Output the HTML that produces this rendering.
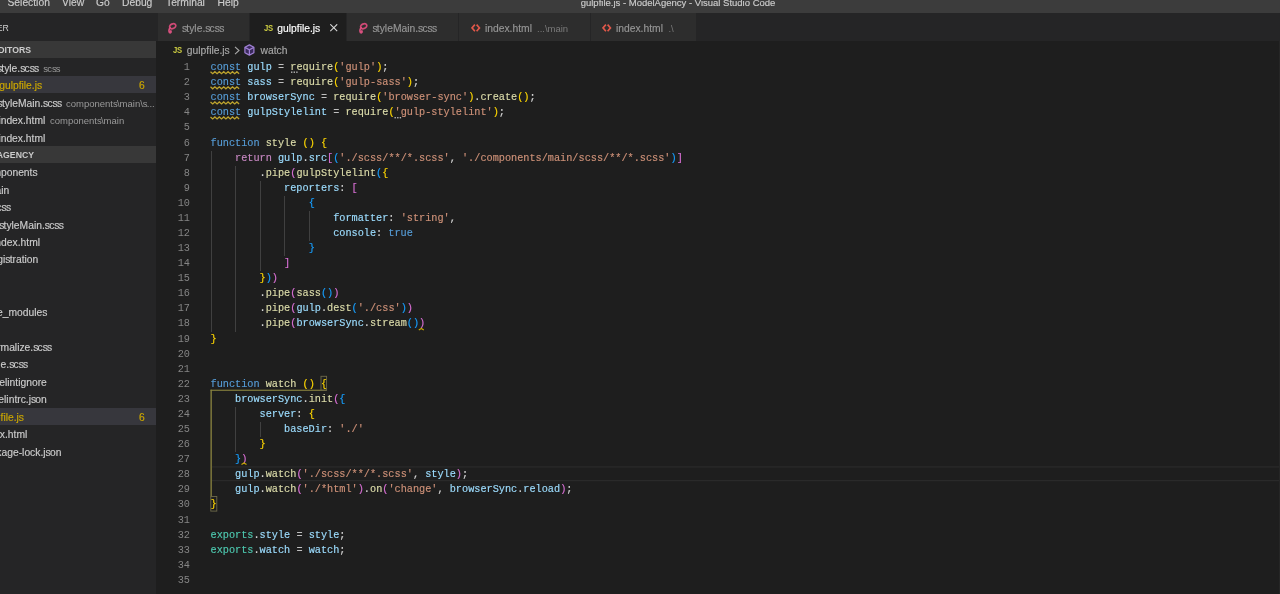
<!DOCTYPE html>
<html><head><meta charset="utf-8"><style>
*{margin:0;padding:0;box-sizing:border-box}
html,body{width:1280px;height:594px;overflow:hidden;background:#1e1e1e;font-family:"Liberation Sans",sans-serif}
.abs{position:absolute}
#title{position:absolute;left:0;top:0;width:1280px;height:13px;background:#3c3c3c;overflow:hidden}
#title span{position:absolute;top:-3.6px;font-size:10.3px;color:#cccccc;line-height:14px;white-space:nowrap}
#side{position:absolute;left:0;top:0;width:156px;height:594px;overflow:hidden}
#sidebg{position:absolute;left:0;top:13px;width:156px;height:581px;background:#252526}
#tabbar{position:absolute;left:156px;top:13px;width:1124px;height:27.8px;background:#252526}
#sep{position:absolute;left:156px;top:40.8px;width:1px;height:554px;background:#1e1e1e}
.tab{position:absolute;top:13px;height:27.8px;background:#2d2d2d}
.tab.act{background:#1e1e1e}
.tt,.td{position:absolute;top:21.5px;font-size:10.3px;line-height:14px;color:#969696;white-space:nowrap}
.td{font-size:9.5px;color:#7a7a7a;top:22.3px}
.tt.w{color:#ffffff}
.jsic{position:absolute;font-size:9.4px;font-weight:bold;color:#cbcb41;line-height:14px;letter-spacing:-0.3px;transform:scaleX(0.82);transform-origin:0 0}
.bc{position:absolute;top:43.7px;font-size:10.3px;line-height:14px;color:#a8a8a8;white-space:nowrap}
.ln{position:absolute;left:150px;width:40px;text-align:right;height:15.08px;line-height:15.08px;color:#858585;font-family:"Liberation Mono",monospace;font-size:10.23px;white-space:pre}
.cl{position:absolute;left:210.5px;height:15.08px;line-height:15.08px;font-family:"Liberation Mono",monospace;font-size:10.23px;white-space:pre;color:#d4d4d4;-webkit-text-stroke:0.15px currentColor}
.o{color:#c0c0c0;-webkit-text-stroke:0}.k{color:#569cd6}.c{color:#c586c0}.v{color:#9cdcfe}.f{color:#dcdcaa}.s{color:#ce9178}.p{color:#d4d4d4}.t{color:#4ec9b0}
.b1{color:#ffd700}.b2{color:#da70d6}.b3{color:#179fff}
.ig{position:absolute;width:1px;background:#404040}
.hdr{position:absolute;left:0;width:156px;height:17.47px;background:#383838}
.sel{position:absolute;left:0;width:156px;height:17.47px;background:#37373d}
.sh{position:absolute;font-size:8.7px;font-weight:bold;line-height:17.47px;color:#cccccc;white-space:nowrap}
.si{position:absolute;font-size:10.3px;line-height:17.47px;color:#cccccc;white-space:nowrap}
.si.warn{color:#cca700}
.sd{position:absolute;font-size:9.5px;line-height:17.47px;color:#9a9a9a;white-space:nowrap}
i.n{font-style:normal;letter-spacing:-0.8px}
.si,.tt,.bc,.badge,#title span{-webkit-text-stroke:0.15px currentColor}
.badge{position:absolute;font-size:10.3px;line-height:17.47px;color:#cca700}
</style></head><body>
<div id="root" style="position:absolute;left:0;top:0;width:1280px;height:594px;will-change:transform">
<div id="title">
<span style="left:7.5px">Selection</span><span style="left:62px">View</span><span style="left:96px">Go</span><span style="left:122px">Debug</span><span style="left:166px">Terminal</span><span style="left:217.5px">Help</span>
<span style="left:580.7px;font-size:9.5px">gulpfile.js - ModelAgency - Visual Studio Code</span>
</div>
<div id="sidebg"></div>
<div id="side">
<span class="sh" style="right:147.2px;top:20.00px;font-weight:normal">EXPLORER</span>
<div class="hdr" style="top:40.80px"></div><span class="sh" style="right:125.0px;top:42.10px">OPEN EDITORS</span>
<span class="si" style="right:117.6px;top:59.77px"><i class="n">s</i>tyle.<i class="n">s</i>c<i class="n">s</i><i class="n">s</i></span>
<span class="sd" style="left:43.2px;top:59.77px"><i class="n">s</i>c<i class="n">s</i><i class="n">s</i></span>
<div class="sel" style="top:75.74px"></div>
<span class="si warn" style="right:114.7px;top:77.24px">gulpfile.j<i class="n">s</i></span>
<span class="badge" style="left:138.9px;top:77.24px">6</span>
<span class="si" style="right:94.7px;top:94.71px"><i class="n">s</i>tyleMain.<i class="n">s</i>c<i class="n">s</i><i class="n">s</i></span>
<span class="sd" style="left:66.0px;top:94.71px">component<i class="n">s</i>\main\<i class="n">s</i>...</span>
<span class="si" style="right:110.7px;top:112.18px">index.html</span>
<span class="sd" style="left:50.0px;top:112.18px">component<i class="n">s</i>\main</span>
<span class="si" style="right:110.7px;top:129.65px">index.html</span>
<div class="hdr" style="top:145.62px"></div><span class="sh" style="right:122.0px;top:146.92px">MODELAGENCY</span>
<span class="si" style="right:119.2px;top:164.09px">component<i class="n">s</i></span>
<span class="si" style="right:146.8px;top:181.56px">main</span>
<span class="si" style="right:145.7px;top:199.03px"><i class="n">s</i>c<i class="n">s</i><i class="n">s</i></span>
<span class="si" style="right:93.0px;top:216.50px"><i class="n">s</i>tyleMain.<i class="n">s</i>c<i class="n">s</i><i class="n">s</i></span>
<span class="si" style="right:116.0px;top:233.97px">index.html</span>
<span class="si" style="right:117.7px;top:251.44px">regi<i class="n">s</i>tration</span>
<span class="si" style="right:109.4px;top:303.85px">node_module<i class="n">s</i></span>
<span class="si" style="right:104.6px;top:338.79px">normalize.<i class="n">s</i>c<i class="n">s</i><i class="n">s</i></span>
<span class="si" style="right:128.6px;top:356.26px"><i class="n">s</i>tyle.<i class="n">s</i>c<i class="n">s</i><i class="n">s</i></span>
<span class="si" style="right:109.2px;top:373.73px">.<i class="n">s</i>tylelintignore</span>
<span class="si" style="right:109.2px;top:391.20px">.<i class="n">s</i>tylelintrc.j<i class="n">s</i>on</span>
<div class="sel" style="top:407.67px"></div>
<span class="si warn" style="right:132.8px;top:408.67px">gulpfile.j<i class="n">s</i></span>
<span class="badge" style="left:138.9px;top:408.67px">6</span>
<span class="si" style="right:128.7px;top:426.14px">index.html</span>
<span class="si" style="right:94.6px;top:443.61px">package-lock.j<i class="n">s</i>on</span>
</div>
<div id="sep"></div>
<div id="tabbar"></div>
<div class="tab" style="left:157.5px;width:91.5px"></div>
<div class="tab act" style="left:250px;width:96px"></div>
<div class="tab" style="left:347px;width:110.5px"></div>
<div class="tab" style="left:459px;width:130.5px"></div>
<div class="tab" style="left:590.5px;width:105.5px"></div>
<svg class="abs" style="left:167px;top:21.6px" width="11" height="12" viewBox="0 0 11 12"><ellipse cx="5.7" cy="4.2" rx="3.2" ry="2.3" transform="rotate(-25 5.7 4.2)" fill="none" stroke="#d04a76" stroke-width="1.7"/><path d="M3.2 5.6 C2.0 7.0 1.6 9.4 2.6 10.6 C3.4 11.2 4.4 10.2 3.8 9.0" fill="none" stroke="#d8507e" stroke-width="1.8" stroke-linecap="round"/></svg>
<span class="tt" style="left:182px"><i class="n">s</i>tyle.<i class="n">s</i>c<i class="n">s</i><i class="n">s</i></span>
<span class="jsic" style="left:263.5px;top:20.9px">JS</span>
<span class="tt w" style="left:277.3px">gulpfile.j<i class="n">s</i></span>
<svg class="abs" style="left:330px;top:24.2px" width="8" height="8" viewBox="0 0 8 8"><path d="M0.3 0.3 L7.2 7.2 M7.2 0.3 L0.3 7.2" stroke="#d8d8d8" stroke-width="1.1"/></svg>
<svg class="abs" style="left:357.8px;top:21.6px" width="11" height="12" viewBox="0 0 11 12"><ellipse cx="5.7" cy="4.2" rx="3.2" ry="2.3" transform="rotate(-25 5.7 4.2)" fill="none" stroke="#d04a76" stroke-width="1.7"/><path d="M3.2 5.6 C2.0 7.0 1.6 9.4 2.6 10.6 C3.4 11.2 4.4 10.2 3.8 9.0" fill="none" stroke="#d8507e" stroke-width="1.8" stroke-linecap="round"/></svg>
<span class="tt" style="left:372.5px"><i class="n">s</i>tyleMain.<i class="n">s</i>c<i class="n">s</i><i class="n">s</i></span>
<svg class="abs" style="left:470.6px;top:24px" width="10" height="8" viewBox="0 0 10 8"><path d="M3.9 0.6 L1.0 3.9 L3.9 7.2 M5.6 0.6 L8.5 3.9 L5.6 7.2" fill="none" stroke="#e2584a" stroke-width="1.6"/></svg>
<span class="tt" style="left:485px">index.html</span><span class="td" style="left:537px">...\main</span>
<svg class="abs" style="left:601.6px;top:24px" width="10" height="8" viewBox="0 0 10 8"><path d="M3.9 0.6 L1.0 3.9 L3.9 7.2 M5.6 0.6 L8.5 3.9 L5.6 7.2" fill="none" stroke="#e2584a" stroke-width="1.6"/></svg>
<span class="tt" style="left:616px">index.html</span><span class="td" style="left:668.4px">.\</span>
<span class="jsic" style="left:172.8px;top:43.1px">JS</span>
<span class="bc" style="left:186.8px">gulpfile.j<i class="n">s</i></span>
<svg class="abs" style="left:233.5px;top:45.5px" width="6" height="9" viewBox="0 0 6 9"><path d="M1 0.8 L5 4.5 L1 8.2" fill="none" stroke="#a8a8a8" stroke-width="1.1"/></svg>
<svg class="abs" style="left:244.1px;top:43.6px" width="11" height="12" viewBox="0 0 11 12"><path d="M5.4 0.9 L9.9 3.3 L9.9 8.7 L5.4 11.1 L0.9 8.7 L0.9 3.3 Z" fill="#3a2a5c" stroke="#a080d4" stroke-width="1.2" stroke-linejoin="round"/><path d="M1 3.4 L5.4 5.7 L9.8 3.4 M5.4 5.7 L5.4 11" fill="none" stroke="#a080d4" stroke-width="1.2"/></svg>
<span class="bc" style="left:260.5px">watch</span>
<div class="ig" style="left:210.50px;top:150.58px;height:180.96px"></div>
<div class="ig" style="left:235.06px;top:165.66px;height:165.88px"></div>
<div class="ig" style="left:259.61px;top:180.74px;height:90.48px"></div>
<div class="ig" style="left:284.17px;top:195.82px;height:60.32px"></div>
<div class="ig" style="left:308.72px;top:210.90px;height:30.16px"></div>
<div class="ig" style="left:235.06px;top:406.94px;height:45.24px"></div>
<div class="ig" style="left:259.61px;top:422.02px;height:15.08px"></div>
<div class="ln" style="top:60.10px">1</div><div class="cl" style="top:60.10px"><span class="k">const</span><span class="p"> </span><span class="v">gulp</span><span class="p"> </span><span class="o">=</span><span class="p"> </span><span class="f">require</span><span class="b1">(</span><span class="s">'gulp'</span><span class="b1">)</span><span class="p">;</span></div>
<div class="ln" style="top:75.18px">2</div><div class="cl" style="top:75.18px"><span class="k">const</span><span class="p"> </span><span class="v">sass</span><span class="p"> </span><span class="o">=</span><span class="p"> </span><span class="f">require</span><span class="b1">(</span><span class="s">'gulp-sass'</span><span class="b1">)</span><span class="p">;</span></div>
<div class="ln" style="top:90.26px">3</div><div class="cl" style="top:90.26px"><span class="k">const</span><span class="p"> </span><span class="v">browserSync</span><span class="p"> </span><span class="o">=</span><span class="p"> </span><span class="f">require</span><span class="b1">(</span><span class="s">'browser-sync'</span><span class="b1">)</span><span class="p">.</span><span class="f">create</span><span class="b1">()</span><span class="p">;</span></div>
<div class="ln" style="top:105.34px">4</div><div class="cl" style="top:105.34px"><span class="k">const</span><span class="p"> </span><span class="v">gulpStylelint</span><span class="p"> </span><span class="o">=</span><span class="p"> </span><span class="f">require</span><span class="b1">(</span><span class="s">'gulp-stylelint'</span><span class="b1">)</span><span class="p">;</span></div>
<div class="ln" style="top:120.42px">5</div><div class="cl" style="top:120.42px"></div>
<div class="ln" style="top:135.50px">6</div><div class="cl" style="top:135.50px"><span class="k">function</span><span class="p"> </span><span class="f">style</span><span class="p"> </span><span class="b1">()</span><span class="p"> </span><span class="b1">{</span></div>
<div class="ln" style="top:150.58px">7</div><div class="cl" style="top:150.58px"><span class="p">    </span><span class="c">return</span><span class="p"> </span><span class="v">gulp</span><span class="p">.</span><span class="v">src</span><span class="b2">[</span><span class="b3">(</span><span class="s">'./scss/**/*.scss'</span><span class="p">, </span><span class="s">'./components/main/scss/**/*.scss'</span><span class="b3">)</span><span class="b2">]</span></div>
<div class="ln" style="top:165.66px">8</div><div class="cl" style="top:165.66px"><span class="p">        .</span><span class="f">pipe</span><span class="b2">(</span><span class="f">gulpStylelint</span><span class="b3">(</span><span class="b1">{</span></div>
<div class="ln" style="top:180.74px">9</div><div class="cl" style="top:180.74px"><span class="p">            </span><span class="v">reporters</span><span class="p">: </span><span class="b2">[</span></div>
<div class="ln" style="top:195.82px">10</div><div class="cl" style="top:195.82px"><span class="p">                </span><span class="b3">{</span></div>
<div class="ln" style="top:210.90px">11</div><div class="cl" style="top:210.90px"><span class="p">                    </span><span class="v">formatter</span><span class="p">: </span><span class="s">'string'</span><span class="p">,</span></div>
<div class="ln" style="top:225.98px">12</div><div class="cl" style="top:225.98px"><span class="p">                    </span><span class="v">console</span><span class="p">: </span><span class="k">true</span></div>
<div class="ln" style="top:241.06px">13</div><div class="cl" style="top:241.06px"><span class="p">                </span><span class="b3">}</span></div>
<div class="ln" style="top:256.14px">14</div><div class="cl" style="top:256.14px"><span class="p">            </span><span class="b2">]</span></div>
<div class="ln" style="top:271.22px">15</div><div class="cl" style="top:271.22px"><span class="p">        </span><span class="b1">}</span><span class="b3">)</span><span class="b2">)</span></div>
<div class="ln" style="top:286.30px">16</div><div class="cl" style="top:286.30px"><span class="p">        .</span><span class="f">pipe</span><span class="b2">(</span><span class="f">sass</span><span class="b3">()</span><span class="b2">)</span></div>
<div class="ln" style="top:301.38px">17</div><div class="cl" style="top:301.38px"><span class="p">        .</span><span class="f">pipe</span><span class="b2">(</span><span class="v">gulp</span><span class="p">.</span><span class="f">dest</span><span class="b3">(</span><span class="s">'./css'</span><span class="b3">)</span><span class="b2">)</span></div>
<div class="ln" style="top:316.46px">18</div><div class="cl" style="top:316.46px"><span class="p">        .</span><span class="f">pipe</span><span class="b2">(</span><span class="v">browserSync</span><span class="p">.</span><span class="f">stream</span><span class="b3">()</span><span class="b2">)</span></div>
<div class="ln" style="top:331.54px">19</div><div class="cl" style="top:331.54px"><span class="b1">}</span></div>
<div class="ln" style="top:346.62px">20</div><div class="cl" style="top:346.62px"></div>
<div class="ln" style="top:361.70px">21</div><div class="cl" style="top:361.70px"></div>
<div class="ln" style="top:376.78px">22</div><div class="cl" style="top:376.78px"><span class="k">function</span><span class="p"> </span><span class="f">watch</span><span class="p"> </span><span class="b1">()</span><span class="p"> </span><span class="b1">{</span></div>
<div class="ln" style="top:391.86px">23</div><div class="cl" style="top:391.86px"><span class="p">    </span><span class="v">browserSync</span><span class="p">.</span><span class="f">init</span><span class="b2">(</span><span class="b3">{</span></div>
<div class="ln" style="top:406.94px">24</div><div class="cl" style="top:406.94px"><span class="p">        </span><span class="v">server</span><span class="p">: </span><span class="b1">{</span></div>
<div class="ln" style="top:422.02px">25</div><div class="cl" style="top:422.02px"><span class="p">            </span><span class="v">baseDir</span><span class="p">: </span><span class="s">'./'</span></div>
<div class="ln" style="top:437.10px">26</div><div class="cl" style="top:437.10px"><span class="p">        </span><span class="b1">}</span></div>
<div class="ln" style="top:452.18px">27</div><div class="cl" style="top:452.18px"><span class="p">    </span><span class="b3">}</span><span class="b2">)</span></div>
<div class="ln" style="top:467.26px">28</div><div class="cl" style="top:467.26px"><span class="p">    </span><span class="v">gulp</span><span class="p">.</span><span class="f">watch</span><span class="b2">(</span><span class="s">'./scss/**/*.scss'</span><span class="p">, </span><span class="v">style</span><span class="b2">)</span><span class="p">;</span></div>
<div class="ln" style="top:482.34px">29</div><div class="cl" style="top:482.34px"><span class="p">    </span><span class="v">gulp</span><span class="p">.</span><span class="f">watch</span><span class="b2">(</span><span class="s">'./*html'</span><span class="b2">)</span><span class="p">.</span><span class="f">on</span><span class="b2">(</span><span class="s">'change'</span><span class="p">, </span><span class="v">browserSync</span><span class="p">.</span><span class="v">reload</span><span class="b2">)</span><span class="p">;</span></div>
<div class="ln" style="top:497.42px">30</div><div class="cl" style="top:497.42px"><span class="b1">}</span></div>
<div class="ln" style="top:512.50px">31</div><div class="cl" style="top:512.50px"></div>
<div class="ln" style="top:527.58px">32</div><div class="cl" style="top:527.58px"><span class="t">exports</span><span class="p">.</span><span class="v">style</span><span class="p"> </span><span class="o">=</span><span class="p"> </span><span class="v">style</span><span class="p">;</span></div>
<div class="ln" style="top:542.66px">33</div><div class="cl" style="top:542.66px"><span class="t">exports</span><span class="p">.</span><span class="v">watch</span><span class="p"> </span><span class="o">=</span><span class="p"> </span><span class="v">watch</span><span class="p">;</span></div>
<div class="ln" style="top:557.74px">34</div><div class="cl" style="top:557.74px"></div>
<div class="ln" style="top:572.82px">35</div><div class="cl" style="top:572.82px"></div>
<svg style="position:absolute;left:0;top:0" width="1280" height="594"><polyline points="210.5,71.7 212.7,73.7 214.9,71.7 217.1,73.7 219.3,71.7 221.5,73.7 223.7,71.7 225.9,73.7 228.1,71.7 230.3,73.7 232.5,71.7 234.7,73.7 236.9,71.7 239.1,73.7" fill="none" stroke="#bca32e" stroke-width="1.3"/><polyline points="210.5,86.8 212.7,88.8 214.9,86.8 217.1,88.8 219.3,86.8 221.5,88.8 223.7,86.8 225.9,88.8 228.1,86.8 230.3,88.8 232.5,86.8 234.7,88.8 236.9,86.8 239.1,88.8" fill="none" stroke="#bca32e" stroke-width="1.3"/><polyline points="210.5,101.9 212.7,103.9 214.9,101.9 217.1,103.9 219.3,101.9 221.5,103.9 223.7,101.9 225.9,103.9 228.1,101.9 230.3,103.9 232.5,101.9 234.7,103.9 236.9,101.9 239.1,103.9" fill="none" stroke="#bca32e" stroke-width="1.3"/><polyline points="210.5,116.9 212.7,118.9 214.9,116.9 217.1,118.9 219.3,116.9 221.5,118.9 223.7,116.9 225.9,118.9 228.1,116.9 230.3,118.9 232.5,116.9 234.7,118.9 236.9,116.9 239.1,118.9" fill="none" stroke="#bca32e" stroke-width="1.3"/><rect x="291.0" y="71.5" width="1.4" height="1.4" fill="#b4b4b4"/><rect x="293.6" y="71.5" width="1.4" height="1.4" fill="#b4b4b4"/><rect x="296.2" y="71.5" width="1.4" height="1.4" fill="#b4b4b4"/><rect x="394.5" y="117.0" width="1.4" height="1.4" fill="#b4b4b4"/><rect x="397.1" y="117.0" width="1.4" height="1.4" fill="#b4b4b4"/><rect x="399.7" y="117.0" width="1.4" height="1.4" fill="#b4b4b4"/><polyline points="418.8,330.0 421.3,328.5 423.8,330.0" fill="none" stroke="#c8a800" stroke-width="1.2"/><polyline points="241.5,464.5 244.0,463.0 246.5,464.5" fill="none" stroke="#c8a800" stroke-width="1.2"/><rect x="212" y="466.3" width="1068" height="1.2" fill="#2a2a2a"/><rect x="212" y="480" width="1068" height="1.2" fill="#2a2a2a"/><rect x="1279" y="41" width="1" height="553" fill="#262626"/><rect x="210.5" y="389.7" width="116" height="1.1" fill="#8a8440"/><rect x="210.5" y="389.7" width="1.3" height="107" fill="#8a8440"/><rect x="321" y="376.3" width="5.6" height="14" fill="none" stroke="#6e6a4a" stroke-width="0.9"/><rect x="210.8" y="496.5" width="6" height="14.6" fill="none" stroke="#6e6a4a" stroke-width="0.9"/></svg>
</div>
</body></html>
